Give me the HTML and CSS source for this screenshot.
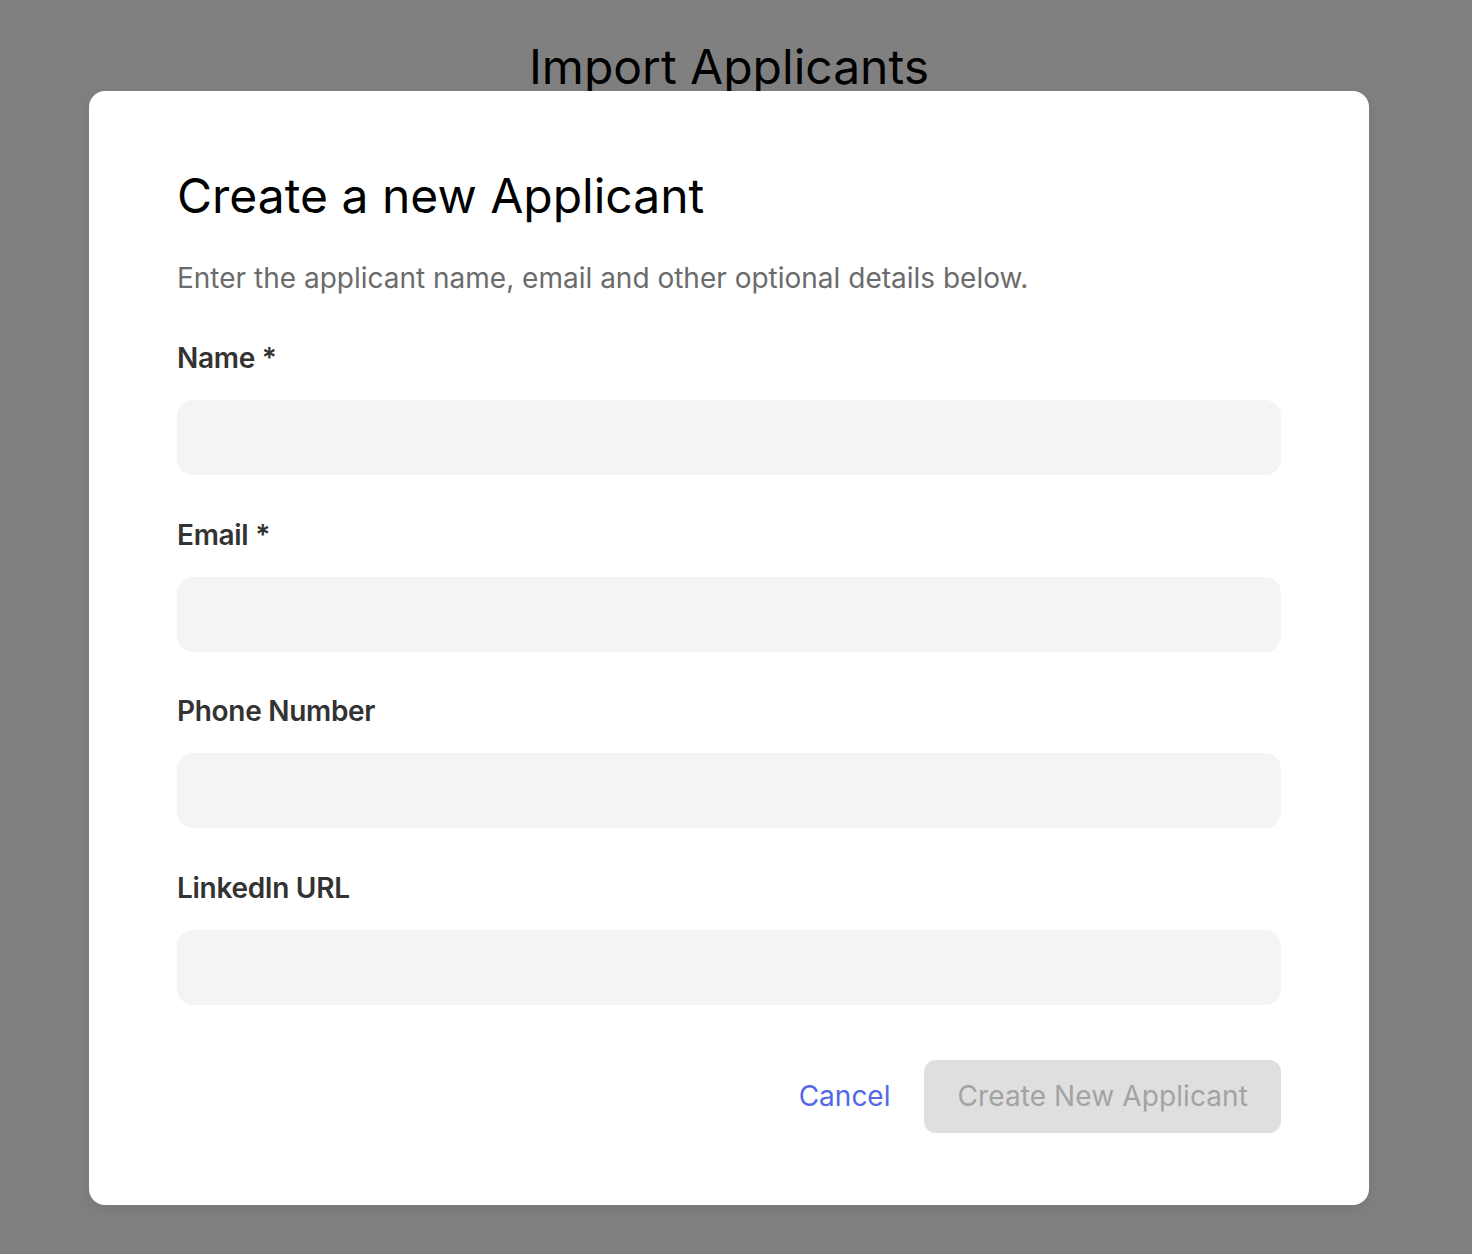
FILE: index.html
```html
<!DOCTYPE html>
<html lang="en">
<head>
<meta charset="utf-8">
<title>Import Applicants</title>
<link rel="stylesheet" href="styles.css">
</head>
<body>
<div class="page">
  <h1 class="page-title">Import Applicants</h1>
  <div class="modal">
    <h2 class="modal-title">Create a new Applicant</h2>
    <p class="modal-desc">Enter the applicant name, email and other optional details below.</p>
    <form class="form">
      <div class="field">
        <label class="label" for="f-name">Name *</label>
        <input class="input" id="f-name" type="text">
      </div>
      <div class="field">
        <label class="label" for="f-email">Email *</label>
        <input class="input" id="f-email" type="email">
      </div>
      <div class="field">
        <label class="label" for="f-phone">Phone Number</label>
        <input class="input" id="f-phone" type="tel">
      </div>
      <div class="field">
        <label class="label" for="f-li">LinkedIn URL</label>
        <input class="input" id="f-li" type="url">
      </div>
      <div class="actions">
        <button type="button" class="btn-cancel">Cancel</button>
        <button type="button" class="btn-primary" disabled>Create New Applicant</button>
      </div>
    </form>
  </div>
</div>
</body>
</html>
```
FILE: styles.css
```css
* { box-sizing: border-box; }
html, body { margin: 0; padding: 0; }
body {
  background: #808080;
  font-family: Inter, "Noto Sans", "Liberation Sans", sans-serif;
  color: #000;
  min-height: 1254px;
}
.page {
  width: 1458px;
}
.page-title {
  margin: 0;
  padding-top: 43px;
  font-size: 48px;
  line-height: 48px;
  font-weight: 400;
  text-align: center;
  color: #000;
}
.modal {
  position: relative;
  width: 1280px;
  margin: 0 auto;
  background: #fff;
  border-radius: 16px;
  padding: 76px 88px 72px;
  box-shadow: 0 4px 16px rgba(0,0,0,0.08);
}
.modal-title {
  margin: 0;
  font-size: 48px;
  line-height: 58px;
  font-weight: 400;
  color: #000;
}
.modal-desc {
  margin: 36px 0 0;
  font-size: 28px;
  line-height: 34px;
  color: #6b6b6b;
}
.form {
  margin-top: 46px;
  display: flex;
  flex-direction: column;
  gap: 42.5px;
}
.field {
  display: flex;
  flex-direction: column;
  gap: 25px;
}
.label {
  font-size: 28px;
  line-height: 34px;
  font-weight: 600;
  letter-spacing: -0.3px;
  color: #333;
}
.input {
  display: block;
  width: 100%;
  height: 75px;
  border: none;
  border-radius: 16px;
  background: #f4f4f4;
  font: inherit;
  font-size: 26px;
  padding: 0 24px;
  outline: none;
}
.actions {
  margin-top: 12.5px;
  display: flex;
  justify-content: flex-end;
  align-items: center;
  gap: 34px;
}
.btn-cancel {
  border: none;
  background: none;
  padding: 0;
  font: inherit;
  font-size: 28px;
  color: #5469e6;
  cursor: pointer;
}
.btn-primary {
  border: none;
  height: 73px;
  padding: 0 33px;
  border-radius: 12px;
  background: #dfdfdf;
  font: inherit;
  font-size: 28px;
  letter-spacing: 0.1px;
  color: #a3a3a3;
}
```
